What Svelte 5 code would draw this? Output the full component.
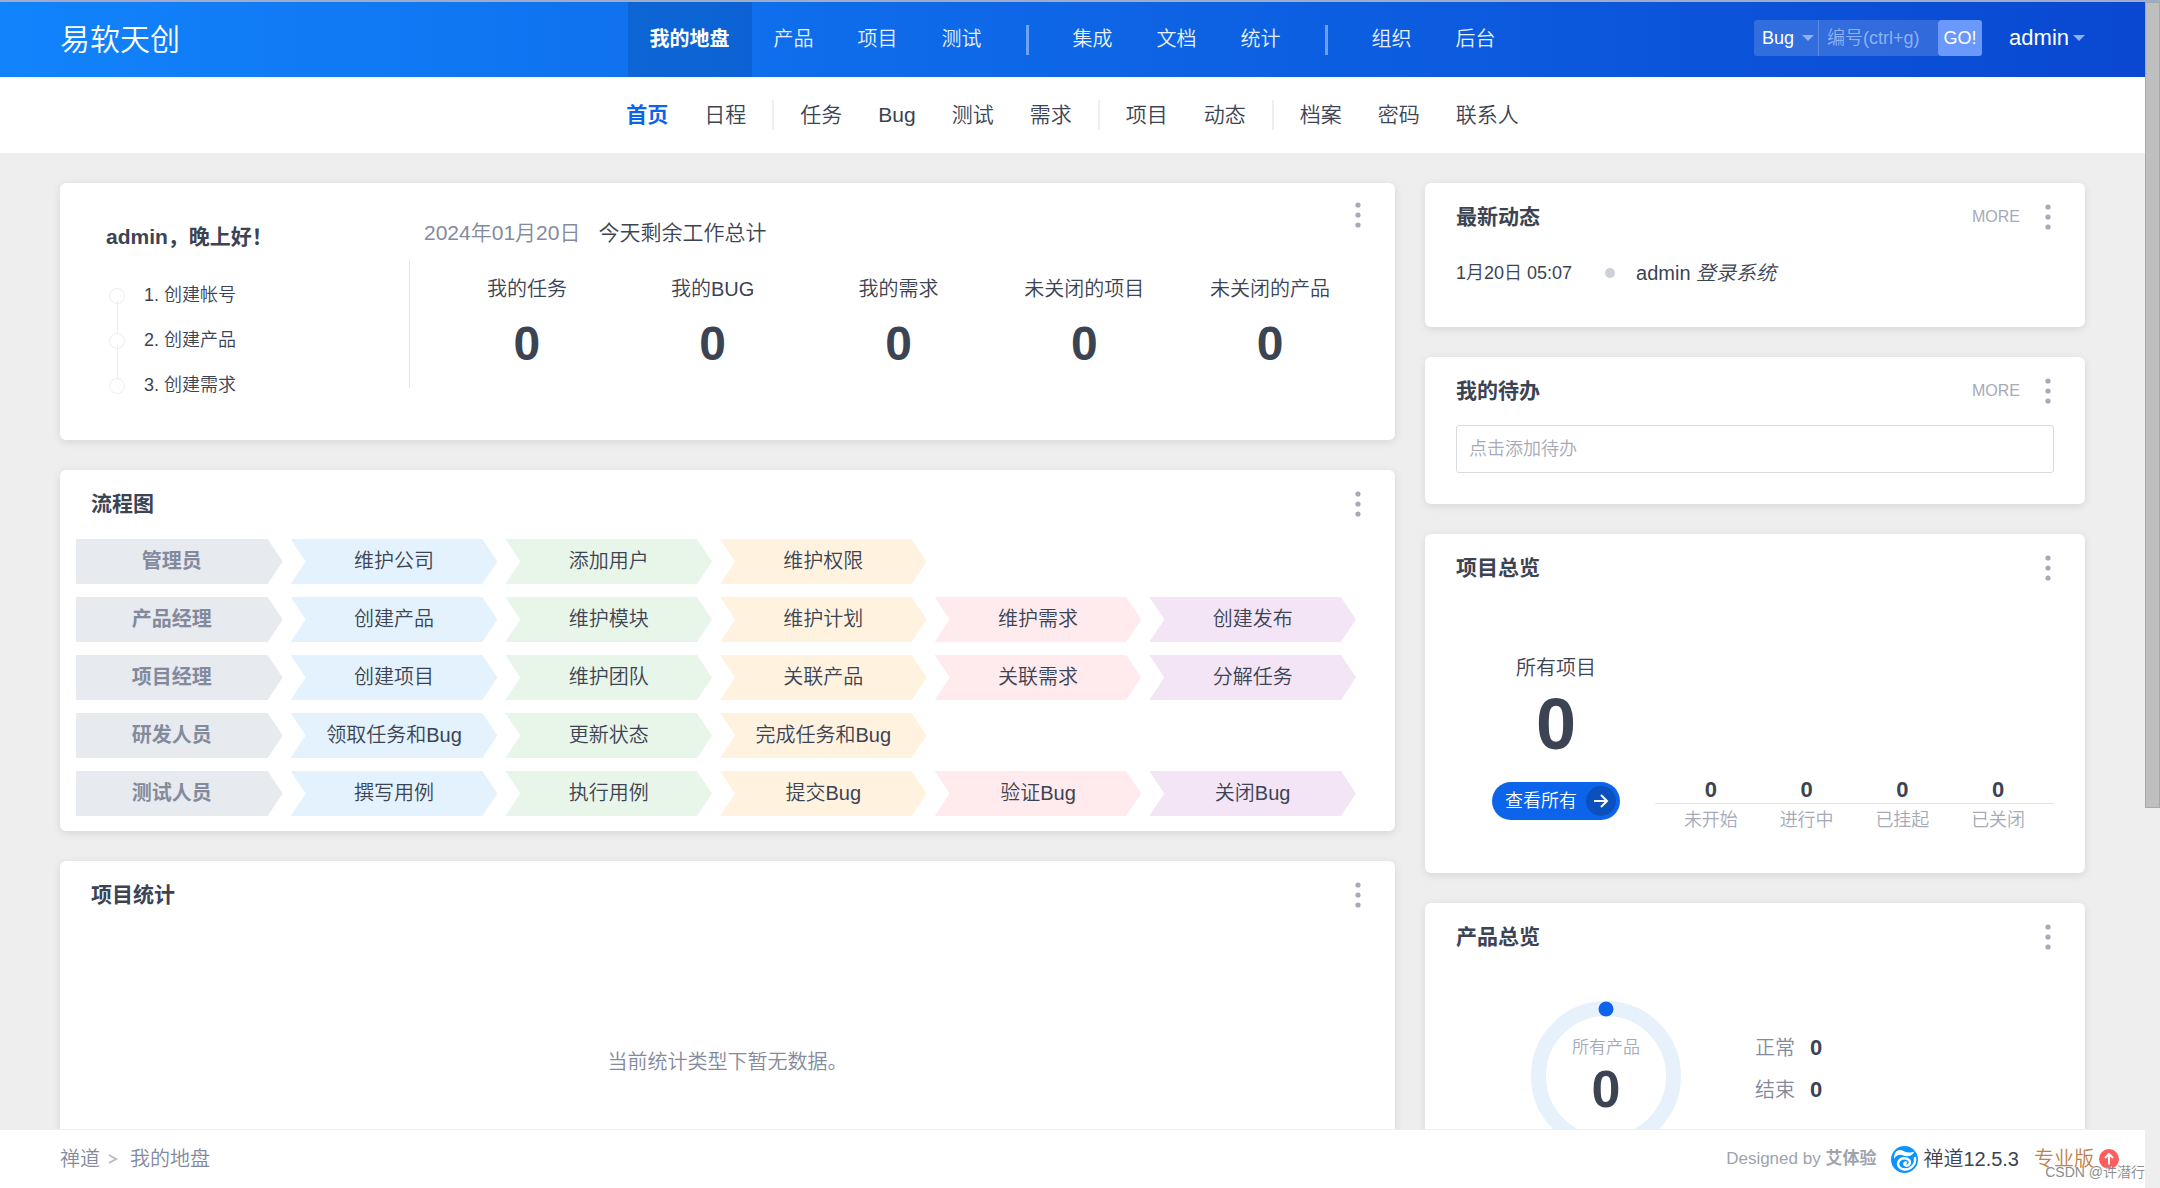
<script>
  const mainNav = [
    ['我的地盘', '产品', '项目', '测试'],
    ['集成', '文档', '统计'],
    ['组织', '后台']
  ];

  const subNav = [
    ['首页', '日程'],
    ['任务', 'Bug', '测试', '需求'],
    ['项目', '动态'],
    ['档案', '密码', '联系人']
  ];

  const steps = ['1. 创建帐号', '2. 创建产品', '3. 创建需求'];

  const todayStats = [
    { label: '我的任务', value: 0 },
    { label: '我的BUG', value: 0 },
    { label: '我的需求', value: 0 },
    { label: '未关闭的项目', value: 0 },
    { label: '未关闭的产品', value: 0 }
  ];

  const flows = [
    { role: '管理员', items: ['维护公司', '添加用户', '维护权限'] },
    { role: '产品经理', items: ['创建产品', '维护模块', '维护计划', '维护需求', '创建发布'] },
    { role: '项目经理', items: ['创建项目', '维护团队', '关联产品', '关联需求', '分解任务'] },
    { role: '研发人员', items: ['领取任务和Bug', '更新状态', '完成任务和Bug'] },
    { role: '测试人员', items: ['撰写用例', '执行用例', '提交Bug', '验证Bug', '关闭Bug'] }
  ];

  const projectStates = [
    { label: '未开始', value: 0 },
    { label: '进行中', value: 0 },
    { label: '已挂起', value: 0 },
    { label: '已关闭', value: 0 }
  ];

  const productStates = [
    { label: '正常', value: 0 },
    { label: '结束', value: 0 }
  ];

  let activeMain = $state('我的地盘');
  let activeSub = $state('首页');
  let keyword = $state('');
  let todo = $state('');
</script>

{#snippet caret()}
  <svg class="caret" viewBox="0 0 12 6" aria-hidden="true"><path d="M0 0h12L6 6z" /></svg>
{/snippet}

{#snippet menu()}
  <button class="menu" type="button" aria-label="更多操作">
    <svg viewBox="0 0 6 26" aria-hidden="true">
      <circle cx="3" cy="3" r="2.6" /><circle cx="3" cy="13" r="2.6" /><circle cx="3" cy="23" r="2.6" />
    </svg>
  </button>
{/snippet}

<div class="app">
  <div class="page">
    <header class="header">
      <div class="side"><a class="company" href="#home">易软天创</a></div>

      <nav class="main-nav" aria-label="主导航">
        {#each mainNav as group, i}
          {#if i > 0}<span class="divider"></span>{/if}
          {#each group as item}
            <a
              href="#{item}"
              class:active={item === activeMain}
              onclick={() => (activeMain = item)}>{item}</a>
          {/each}
        {/each}
      </nav>

      <div class="side tools">
        <form class="search" onsubmit={(e) => e.preventDefault()}>
          <div class="search-type">
            <select aria-label="搜索类型">
              <option>Bug</option>
              <option>任务</option>
              <option>需求</option>
            </select>
            {@render caret()}
          </div>
          <input type="text" aria-label="编号" placeholder="编号(ctrl+g)" bind:value={keyword} />
          <button type="submit">GO!</button>
        </form>
        <button class="user" type="button">admin{@render caret()}</button>
      </div>
    </header>

    <nav class="sub-nav" aria-label="子导航">
      {#each subNav as group, i}
        {#if i > 0}<span class="divider"></span>{/if}
        {#each group as item}
          <a
            href="#my-{item}"
            class:active={item === activeSub}
            onclick={() => (activeSub = item)}>{item}</a>
        {/each}
      {/each}
    </nav>

    <main class="content">
      <div class="column">
        <section class="card welcome">
          <div class="greeting">
            <h2>admin，晚上好！</h2>
            <ol>
              {#each steps as step}
                <li><a href="#step">{step}</a></li>
              {/each}
            </ol>
          </div>
          <div class="today">
            <p class="today-title"><span>2024年01月20日</span>今天剩余工作总计</p>
            <dl class="today-stats">
              {#each todayStats as stat}
                <div>
                  <dt>{stat.label}</dt>
                  <dd>{stat.value}</dd>
                </div>
              {/each}
            </dl>
          </div>
          {@render menu()}
        </section>

        <section class="card">
          <div class="card-head">
            <h2>流程图</h2>
            {@render menu()}
          </div>
          <div class="flows">
            {#each flows as flow}
              <div class="flow">
                <strong class="role">{flow.role}</strong>
                {#each flow.items as item, i}
                  <a class="step step-{i + 1}" href="#flow">{item}</a>
                {/each}
              </div>
            {/each}
          </div>
        </section>

        <section class="card">
          <div class="card-head">
            <h2>项目统计</h2>
            {@render menu()}
          </div>
          <p class="empty">当前统计类型下暂无数据。</p>
        </section>
      </div>

      <div class="column">
        <section class="card">
          <div class="card-head">
            <h2>最新动态</h2>
            <a class="more" href="#dynamic">MORE</a>
            {@render menu()}
          </div>
          <ul class="timeline">
            <li>
              <time>1月20日 05:07</time>
              <span class="dot"></span>
              <span class="event">admin <em>登录系统</em></span>
            </li>
          </ul>
        </section>

        <section class="card">
          <div class="card-head">
            <h2>我的待办</h2>
            <a class="more" href="#todo">MORE</a>
            {@render menu()}
          </div>
          <div class="todo">
            <input type="text" aria-label="添加待办" placeholder="点击添加待办" bind:value={todo} />
          </div>
        </section>

        <section class="card">
          <div class="card-head">
            <h2>项目总览</h2>
            {@render menu()}
          </div>
          <div class="projects">
            <div class="projects-total">
              <span>所有项目</span>
              <strong>0</strong>
              <a class="view-all" href="#projects">
                查看所有
                <svg viewBox="0 0 30 30" aria-hidden="true">
                  <circle cx="15" cy="15" r="15" />
                  <path d="M8 15h13M15 9l6 6-6 6" />
                </svg>
              </a>
            </div>
            <dl class="project-states">
              {#each projectStates as state}
                <div>
                  <dd>{state.value}</dd>
                  <dt>{state.label}</dt>
                </div>
              {/each}
            </dl>
          </div>
        </section>

        <section class="card">
          <div class="card-head">
            <h2>产品总览</h2>
            {@render menu()}
          </div>
          <div class="products">
            <div class="ring">
              <svg viewBox="0 0 150 150" aria-hidden="true">
                <circle class="track" cx="75" cy="75" r="67.5" />
                <circle class="knob" cx="75" cy="8" r="7.5" />
              </svg>
              <div class="ring-text">
                <span>所有产品</span>
                <strong>0</strong>
              </div>
            </div>
            <dl class="product-states">
              {#each productStates as state}
                <div>
                  <dt>{state.label}</dt>
                  <dd>{state.value}</dd>
                </div>
              {/each}
            </dl>
          </div>
        </section>
      </div>
    </main>

    <footer class="footer">
      <nav class="crumbs" aria-label="面包屑">
        <a href="#zentao">禅道</a>
        <svg viewBox="0 0 10 12" aria-hidden="true"><path d="M1 2l7 4-7 4" /></svg>
        <a href="#my">我的地盘</a>
      </nav>
      <div class="powered">
        <span class="designed">Designed by <strong>艾体验</strong></span>
        <a class="version" href="#version">
          <svg viewBox="0 0 27 27" aria-hidden="true">
            <circle cx="13.5" cy="13.5" r="13.5" />
            <path class="wave" d="M3 13C2.500 7.500 5.500 3.500 9.500 4C13.500 4.500 15.500 8.500 23.500 5.500C21 10.500 16 11 12.500 9.500C8.500 8 5.500 9 3 13z" />
            <path class="curl" d="M24 12C25 18 20 23.500 14 23.500C8.500 23.500 5.500 18.500 8 15C10.500 11.500 16 11.500 18.500 14.500C20 18 17 20.500 14.500 19.500C12.500 18.500 13 16.500 15 16.500" />
          </svg>
          禅道12.5.3
        </a>
        <a class="pro" href="#pro">
          专业版
          <svg viewBox="0 0 20 20" aria-hidden="true">
            <circle cx="10" cy="10" r="10" />
            <path d="M10 15.500V6M6 9l4-4 4 4" />
          </svg>
        </a>
      </div>
      <span class="watermark">CSDN @许潜行</span>
    </footer>
  </div>

  <div class="scrollbar" aria-hidden="true"><span></span></div>
</div>

<style>
  :global(body) {
    background: #eee;
  }

  h2,
  p,
  ol,
  ul,
  dl,
  dd {
    margin: 0;
    padding: 0;
    list-style: none;
  }

  a {
    color: inherit;
    text-decoration: none;
  }

  button,
  input,
  select {
    box-sizing: border-box;
    margin: 0;
    border: 0;
    font-family: inherit;
    font-weight: inherit;
    color: inherit;
  }

  button {
    background: none;
    cursor: pointer;
  }

  .app {
    display: flex;
    box-sizing: border-box;
    height: 100vh;
    overflow: hidden;
    border-top: 2px solid #9dadc9;
    font-family: 'Liberation Sans', 'Noto Sans CJK SC', sans-serif;
    font-size: 20px;
    font-weight: 350;
    line-height: 30px;
    color: #3c4353;
  }

  strong {
    font-weight: 700;
  }

  .page {
    flex: 1;
    min-width: 0;
    display: flex;
    flex-direction: column;
  }

  /* Header */
  .header {
    flex: none;
    display: flex;
    height: 75px;
    padding: 0 60px;
    background: linear-gradient(90deg, #1183fb, #0a48d1);
    color: #fff;
  }

  .side {
    flex: 1;
    display: flex;
    align-items: center;
  }

  .company {
    font-size: 30px;
    line-height: 45px;
  }

  .main-nav,
  .sub-nav {
    display: flex;
    align-items: center;
    justify-content: center;
  }

  .main-nav a {
    padding: 0 22px;
    line-height: 75px;
    color: #e7f0fd;
  }

  .main-nav a.active {
    background: rgba(0, 0, 0, 0.1);
    color: #fff;
    font-weight: 700;
  }

  .divider {
    width: 3px;
    height: 30px;
  }

  .main-nav .divider {
    margin: 0 22px;
    background: rgba(255, 255, 255, 0.4);
  }

  .tools {
    justify-content: flex-end;
    gap: 27px;
    padding-bottom: 3px;
  }

  .search {
    display: flex;
    height: 36px;
  }

  .search-type {
    display: grid;
    align-items: center;
    background: rgba(255, 255, 255, 0.16);
    border-radius: 3px 0 0 3px;
    border-right: 1px solid rgba(255, 255, 255, 0.2);
  }

  .search-type > * {
    grid-area: 1 / 1;
  }

  .search select {
    appearance: none;
    width: 64px;
    height: 36px;
    padding: 0 0 0 8px;
    background: none;
    font-size: 18px;
  }

  .search option {
    color: #3c4353;
  }

  .caret {
    width: 12px;
    height: 6px;
    fill: #8fb0f2;
  }

  .search-type .caret {
    justify-self: end;
    margin-right: 4px;
    pointer-events: none;
  }

  .search input {
    width: 119px;
    padding: 0 8px;
    background: rgba(255, 255, 255, 0.16);
    font-size: 18px;
  }

  .search input::placeholder {
    color: #8fb0f2;
    opacity: 1;
  }

  .search button {
    width: 44px;
    padding: 0;
    border-radius: 3px;
    background: #6b99fb;
    font-size: 18px;
  }

  .user {
    display: flex;
    align-items: center;
    gap: 4px;
    padding: 0;
    font-size: 22px;
    line-height: 30px;
  }

  .sub-nav {
    flex: none;
    height: 76px;
    background: #fff;
    font-size: 21px;
  }

  .sub-nav a {
    padding: 0 18px;
  }

  .sub-nav a.active {
    color: #0c64eb;
    font-weight: 700;
  }

  .sub-nav .divider {
    width: 2px;
    margin: 0 8px;
    background: #eee;
  }

  /* Cards */
  .content {
    flex: 1;
    min-height: 0;
    overflow: hidden;
    display: grid;
    grid-template-columns: minmax(0, 89fr) minmax(0, 44fr);
    gap: 30px;
    padding: 30px 60px 0;
  }

  .column {
    display: flex;
    flex-direction: column;
    gap: 30px;
  }

  .card {
    background: #fff;
    border-radius: 6px;
    box-shadow: 0 2px 8px rgba(0, 0, 0, 0.1);
  }

  .card-head {
    display: flex;
    align-items: center;
    height: 68px;
    padding: 0 24px 0 31px;
  }

  h2 {
    flex: 1;
    font-size: 21px;
    line-height: 30px;
    font-weight: 700;
  }

  .more {
    margin-right: 15px;
    font-size: 16px;
    color: #a6aab8;
  }

  .menu {
    display: flex;
    padding: 0 10px;
  }

  .menu svg {
    width: 6px;
    height: 26px;
    fill: #a6aab8;
  }

  .welcome {
    display: flex;
    align-items: flex-start;
    padding: 19px 24px 40px 46px;
  }

  .greeting {
    width: 318px;
    padding-top: 20px;
  }

  .greeting ol {
    padding-top: 28px;
  }

  .greeting li {
    position: relative;
    padding: 0 0 15px 38px;
    font-size: 18px;
    line-height: 30px;
  }

  .greeting li:last-child {
    padding-bottom: 0;
  }

  /* Step circles joined by a thin line */
  .greeting li::before {
    content: '';
    position: absolute;
    box-sizing: border-box;
    left: 3px;
    top: 8px;
    width: 16px;
    height: 16px;
    border: 1px solid #eee;
    border-radius: 50%;
  }

  .greeting li:not(:last-child)::after {
    content: '';
    position: absolute;
    left: 11px;
    top: 20px;
    width: 1px;
    height: 33px;
    background: #eee;
  }

  .today {
    flex: 1;
    padding-top: 16px;
  }

  .today-title {
    font-size: 21px;
  }

  .today-title span {
    margin-right: 18px;
    color: #838a9d;
  }

  .today-stats {
    display: grid;
    grid-template-columns: repeat(5, 1fr);
    height: 129px;
    margin: 11px -18px 0 -15px;
    padding-left: 24px;
    border-left: 1px solid #e5e5e5;
    text-align: center;
  }

  .today-stats dt {
    padding-top: 15px;
  }

  .today-stats dd {
    padding-top: 10px;
    font-size: 48px;
    line-height: 60px;
    font-weight: 700;
  }

  .flows {
    display: grid;
    gap: 13px;
    padding: 1px 39px 15px 16px;
  }

  .flow {
    display: grid;
    grid-template-columns: repeat(6, 1fr);
    gap: 8px;
    line-height: 45px;
    text-align: center;
  }

  .role {
    padding-right: 15px;
    background: #e7eaef;
    color: #838a9d;
    clip-path: polygon(0 0, calc(100% - 15px) 0, 100% 50%, calc(100% - 15px) 100%, 0 100%);
  }

  .step {
    clip-path: polygon(0 0, calc(100% - 15px) 0, 100% 50%, calc(100% - 15px) 100%, 0 100%, 15px 50%);
  }

  .step-1 { background: #e3f2fd; }
  .step-2 { background: #e8f5e9; }
  .step-3 { background: #fff3e0; }
  .step-4 { background: #ffebee; }
  .step-5 { background: #f3e5f5; }

  .empty {
    padding: 118px 0 150px;
    text-align: center;
    color: #838a9d;
  }

  .timeline {
    padding: 7px 31px 39px;
    font-size: 18px;
  }

  .timeline li {
    display: flex;
    align-items: center;
  }

  .dot {
    width: 10px;
    height: 10px;
    margin: 0 21px 0 33px;
    border-radius: 50%;
    background: #cbd0db;
  }

  .event {
    font-size: 20px;
  }

  .todo {
    display: flex;
    padding: 0 31px 31px;
  }

  .todo input {
    flex: 1;
    height: 48px;
    padding: 0 12px;
    border: 1px solid #d8dbde;
    border-radius: 3px;
    font-size: 18px;
  }

  .todo input::placeholder {
    color: #a6aab8;
    opacity: 1;
  }

  .projects {
    display: flex;
    align-items: flex-end;
    padding: 51px 31px 38px 67px;
  }

  .projects-total {
    display: flex;
    flex-direction: column;
    align-items: center;
    width: 128px;
    padding-bottom: 15px;
  }

  .projects-total strong {
    font-size: 72px;
    line-height: 82px;
  }

  .view-all {
    display: flex;
    align-items: center;
    gap: 9px;
    height: 38px;
    margin-top: 17px;
    padding: 0 4px 0 13px;
    border-radius: 19px;
    background: #0c64eb;
    font-size: 18px;
    white-space: nowrap;
    color: #fff;
  }

  .view-all svg {
    width: 30px;
    height: 30px;
    fill: #0b50bc;
  }

  .view-all path {
    fill: none;
    stroke: #fff;
    stroke-width: 2;
  }

  .project-states {
    position: relative;
    flex: 1;
    display: grid;
    grid-template-columns: repeat(4, 1fr);
    margin-left: 35px;
    padding: 0 8px;
    text-align: center;
  }

  /* Axis line between the values and their labels */
  .project-states::before {
    content: '';
    position: absolute;
    left: 0;
    right: 0;
    top: 26px;
    height: 1px;
    background: #e5e5e5;
  }

  .project-states dd {
    font-size: 22px;
    line-height: 26px;
    font-weight: 700;
  }

  .project-states dt {
    padding-top: 2px;
    font-size: 18px;
    color: #a6aab8;
  }

  .products {
    display: flex;
    padding: 30px 31px 60px 106px;
  }

  .ring {
    display: grid;
    width: 150px;
    height: 150px;
  }

  .ring > * {
    grid-area: 1 / 1;
  }

  .track {
    fill: none;
    stroke: #e7f1fc;
    stroke-width: 15;
  }

  .knob {
    fill: #0c64eb;
  }

  .ring-text {
    display: flex;
    flex-direction: column;
    align-items: center;
    padding-top: 35px;
    font-size: 17px;
    line-height: 24px;
    color: #a6aab8;
  }

  .ring-text strong {
    font-size: 52px;
    line-height: 58px;
    color: #3c4353;
  }

  .product-states {
    display: grid;
    align-content: start;
    gap: 12px;
    padding: 32px 0 0 74px;
  }

  .product-states div {
    display: flex;
    gap: 15px;
  }

  .product-states dt {
    color: #838a9d;
  }

  .product-states dd {
    font-size: 22px;
    font-weight: 700;
  }

  /* Footer */
  .footer {
    position: relative;
    flex: none;
    display: flex;
    align-items: center;
    justify-content: space-between;
    height: 58px;
    padding: 0 26px 0 60px;
    border-top: 1px solid #eee;
    background: #fff;
  }

  .crumbs,
  .powered,
  .version,
  .pro {
    display: flex;
    align-items: center;
  }

  .crumbs {
    gap: 8px;
    color: #838a9d;
  }

  .crumbs svg {
    width: 10px;
    height: 12px;
    margin-right: 4px;
    fill: none;
    stroke: #bbb;
    stroke-width: 2;
  }

  .powered {
    gap: 15px;
  }

  .designed {
    font-size: 17px;
    color: #a0a3ad;
  }

  .version {
    gap: 5px;
  }

  .version svg {
    width: 27px;
    height: 27px;
    fill: #0a94ff;
  }

  .version .wave {
    fill: #fff;
  }

  .version .curl {
    fill: none;
    stroke: #fff;
    stroke-width: 2.4;
    stroke-linecap: round;
  }

  .pro {
    gap: 5px;
    color: #c08046;
  }

  .pro svg {
    width: 20px;
    height: 20px;
    fill: #ff5d5d;
  }

  .pro path {
    fill: none;
    stroke: #fff;
    stroke-width: 2;
  }

  .watermark {
    position: absolute;
    right: 0;
    bottom: 6px;
    font-size: 14px;
    line-height: 20px;
    color: #8c8c8c;
    text-shadow: 1px 1px 0 #fff;
  }

  .scrollbar {
    flex: none;
    width: 15px;
    background: #eee;
  }

  .scrollbar span {
    display: block;
    box-sizing: border-box;
    height: 68%;
    border: 1px solid #a8a8a8;
    background: #bfbfbf;
  }
</style>
